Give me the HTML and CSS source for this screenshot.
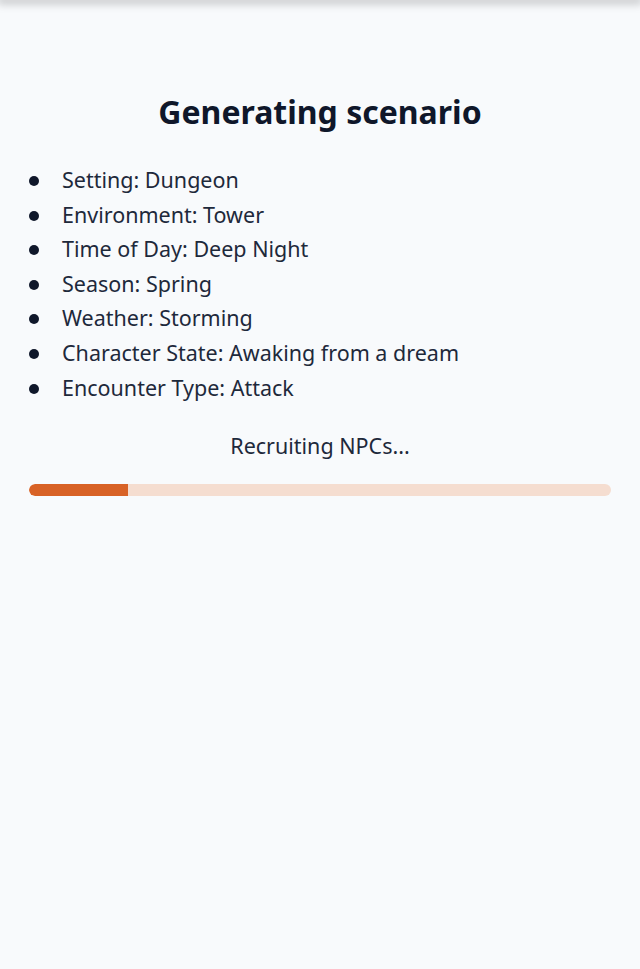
FILE: index.html
```html
<!DOCTYPE html>
<html lang="en">
<head>
    <meta charset="UTF-8">
    <meta name="viewport" content="width=device-width, initial-scale=1.0">
    <title>Generating scenario</title>
    <link rel="stylesheet" href="styles.css">
</head>
<body>

    <header class="topbar"></header>

    <!-- Loading panel -->
    <main class="loading">
        <h1>Generating scenario</h1>
        <ul class="traits">
            <li>Setting: Dungeon</li>
            <li>Environment: Tower</li>
            <li>Time of Day: Deep Night</li>
            <li>Season: Spring</li>
            <li>Weather: Storming</li>
            <li>Character State: Awaking from a dream</li>
            <li>Encounter Type: Attack</li>
        </ul>
        <p class="status">Recruiting NPCs...</p>
        <div class="progress">
            <div class="progress-fill" style="width: 17%;"></div>
        </div>
    </main>

</body>
</html>
```

FILE: styles.css
```css
/* Global Reset */
* { margin: 0; padding: 0; box-sizing: border-box; }

body {
    font-family: "Noto Sans", "Open Sans", sans-serif;
    background-color: #f8fafc;
    color: #0f172a;
    min-height: 100vh;
}

.topbar {
    height: 0;
    box-shadow: 0 0 10px 3px rgba(0, 0, 0, 0.28);
}

.loading {
    padding: 90px 29px 0;
}

h1 {
    font-size: 32px;
    font-weight: 700;
    text-align: center;
    line-height: 44px;
    margin-bottom: 29px;
}

.traits {
    list-style: none;
    font-size: 21.5px;
    color: #1e293b;
}

.traits li {
    position: relative;
    padding-left: 33px;
    line-height: 34.6px;
}

.traits li::before {
    content: "";
    position: absolute;
    left: 0;
    top: 13px;
    width: 10px;
    height: 10px;
    border-radius: 50%;
    background: #0f172a;
}

.status {
    font-size: 21.5px;
    text-align: center;
    color: #1e293b;
    margin-top: 26px;
    line-height: 30px;
}

.progress {
    margin-top: 23px;
    height: 12px;
    border-radius: 6px;
    background: #f5ddd0;
    overflow: hidden;
}

.progress-fill {
    height: 100%;
    background: #d86226;
    border-radius: 6px 0 0 6px;
}
```
